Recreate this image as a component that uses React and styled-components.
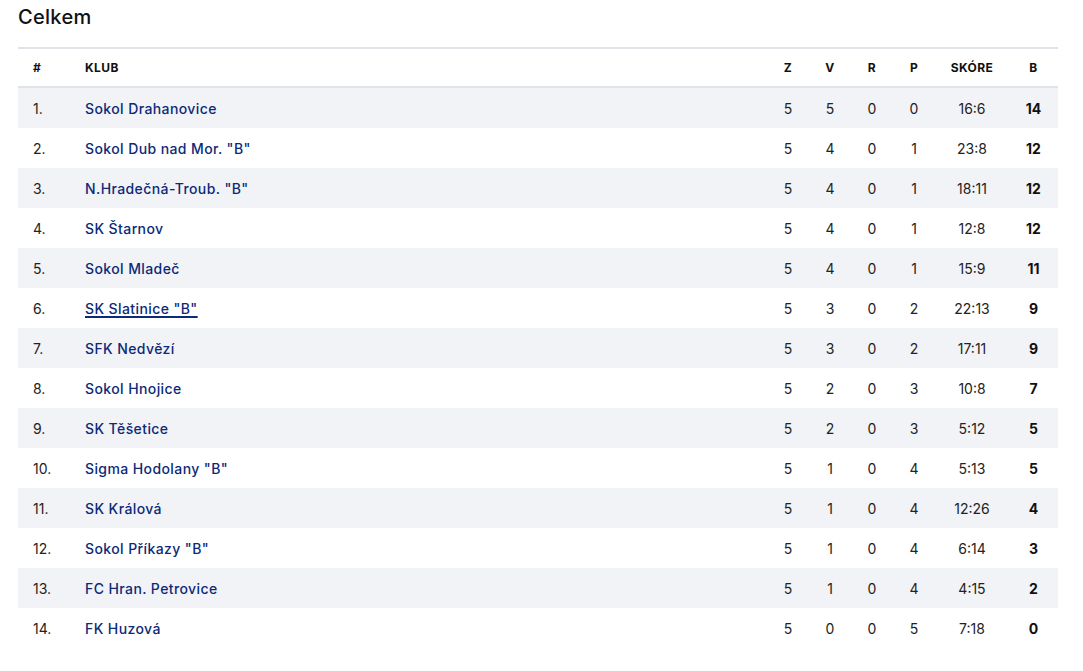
import styled, { createGlobalStyle, css } from "styled-components";

const Global = createGlobalStyle`
  body {
    margin: 0;
    background: #fff;
    font-family: Inter, "Noto Sans", sans-serif;
  }
`;

const Wrap = styled.div`
  padding: 0 25px 0 18px;
`;

const Title = styled.h2`
  margin: 0;
  padding-top: 5px;
  height: 42px;
  font-size: 20px;
  font-weight: 500;
  color: #111;
  letter-spacing: 0.3px;
`;

const Table = styled.div`
  border-top: 2px solid #e1e3e8;
`;

const Row = styled.div`
  display: grid;
  grid-template-columns: 67px 1fr 42px 42px 42px 42px 74px 49px;
  align-items: center;
  height: 40px;
  font-size: 14px;
  color: #222;
  ${(p) =>
    p.$head &&
    css`
      height: 37px;
      border-bottom: 2px solid #e1e3e8;
      font-size: 12px;
      font-weight: 700;
      color: #111;
      letter-spacing: 0.4px;
    `}
  ${(p) =>
    p.$odd &&
    css`
      background: #f2f3f6;
    `}
`;

const Pos = styled.div`
  padding-left: 15px;
`;

const Club = styled.a`
  color: #0c2a78;
  font-weight: 500;
  letter-spacing: 0.4px;
  text-decoration: none;
  ${(p) =>
    p.$active &&
    css`
      text-decoration: underline;
      text-decoration-thickness: 2px;
      text-underline-offset: 2px;
    `}
`;

const Num = styled.div`
  text-align: center;
  ${(p) =>
    p.$bold &&
    css`
      font-weight: 700;
      color: #111;
    `}
`;

const rows = [
  ["Sokol Drahanovice", 5, 5, 0, 0, "16:6", 14],
  ['Sokol Dub nad Mor. "B"', 5, 4, 0, 1, "23:8", 12],
  ['N.Hradečná-Troub. "B"', 5, 4, 0, 1, "18:11", 12],
  ["SK Štarnov", 5, 4, 0, 1, "12:8", 12],
  ["Sokol Mladeč", 5, 4, 0, 1, "15:9", 11],
  ['SK Slatinice "B"', 5, 3, 0, 2, "22:13", 9],
  ["SFK Nedvězí", 5, 3, 0, 2, "17:11", 9],
  ["Sokol Hnojice", 5, 2, 0, 3, "10:8", 7],
  ["SK Těšetice", 5, 2, 0, 3, "5:12", 5],
  ['Sigma Hodolany "B"', 5, 1, 0, 4, "5:13", 5],
  ["SK Králová", 5, 1, 0, 4, "12:26", 4],
  ['Sokol Příkazy "B"', 5, 1, 0, 4, "6:14", 3],
  ["FC Hran. Petrovice", 5, 1, 0, 4, "4:15", 2],
  ["FK Huzová", 5, 0, 0, 5, "7:18", 0],
];

export default function App() {
  return (
    <Wrap>
      <Global />
      <Title>Celkem</Title>
      <Table>
        <Row $head>
          <Pos>#</Pos>
          <div>KLUB</div>
          <Num>Z</Num>
          <Num>V</Num>
          <Num>R</Num>
          <Num>P</Num>
          <Num>SKÓRE</Num>
          <Num>B</Num>
        </Row>
        {rows.map(([name, z, v, r, p, score, pts], i) => (
          <Row key={name} $odd={i % 2 === 0}>
            <Pos>{i + 1}.</Pos>
            <div>
              <Club href="#" $active={i === 5}>
                {name}
              </Club>
            </div>
            <Num>{z}</Num>
            <Num>{v}</Num>
            <Num>{r}</Num>
            <Num>{p}</Num>
            <Num>{score}</Num>
            <Num $bold>{pts}</Num>
          </Row>
        ))}
      </Table>
    </Wrap>
  );
}
